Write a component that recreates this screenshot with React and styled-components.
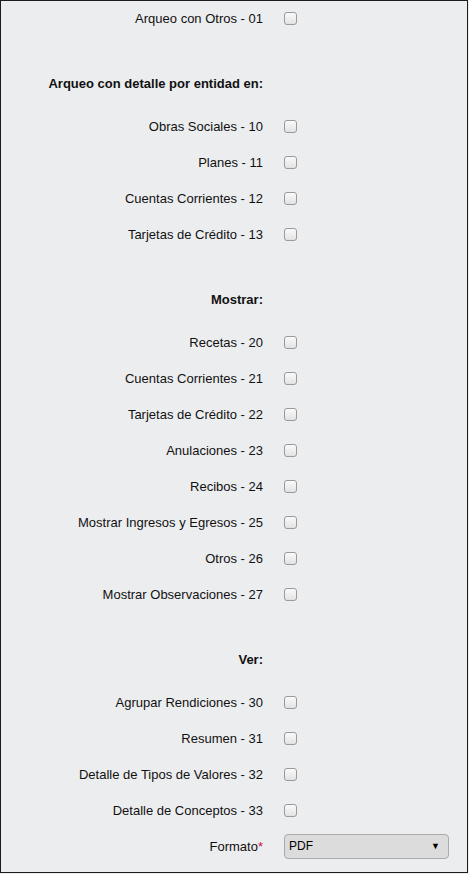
import React from 'react';
import styled, { createGlobalStyle } from 'styled-components';

const GlobalStyle = createGlobalStyle`
  html, body {
    margin: 0;
    padding: 0;
    background: #ecedef;
  }
  body {
    font-family: "Liberation Sans", Arial, sans-serif;
    font-size: 13px;
    color: #111;
  }
`;

const Panel = styled.div`
  box-sizing: border-box;
  width: 468px;
  height: 873px;
  border: 1px solid #1c1c1c;
  background: #ecedef;
  overflow: hidden;
`;

const Row = styled.div`
  display: grid;
  grid-template-columns: 262px 1fr;
  column-gap: 21px;
  align-items: center;
  height: 36px;
`;

const Label = styled.label`
  text-align: right;
  line-height: 16px;
`;

const Heading = styled.div`
  display: grid;
  grid-template-columns: 262px 1fr;
  align-items: center;
  height: 36px;
  margin: 28px 0 8px;
  font-weight: bold;
  text-align: right;
`;

const Check = styled.span`
  display: block;
  box-sizing: border-box;
  width: 13px;
  height: 13px;
  margin-top: -2px;
  border: 1px solid #9a9a9a;
  border-radius: 3px;
  background: linear-gradient(#fafafa, #e2e2e2);
`;

const Required = styled.span`
  color: #d0103a;
`;

const Select = styled.div`
  box-sizing: border-box;
  width: 165px;
  height: 25px;
  margin-top: -2px;
  display: flex;
  align-items: center;
  justify-content: space-between;
  padding: 0 8px 0 4px;
  background: #dcdcdc;
  border: 1px solid #ababab;
  border-radius: 4px;
  font-size: 12px;
  color: #000;
`;

const Arrow = styled.span`
  font-size: 9px;
`;

const sections = [
  { rows: ['Arqueo con Otros - 01'] },
  {
    title: 'Arqueo con detalle por entidad en:',
    rows: ['Obras Sociales - 10', 'Planes - 11', 'Cuentas Corrientes - 12', 'Tarjetas de Crédito - 13'],
  },
  {
    title: 'Mostrar:',
    rows: [
      'Recetas - 20',
      'Cuentas Corrientes - 21',
      'Tarjetas de Crédito - 22',
      'Anulaciones - 23',
      'Recibos - 24',
      'Mostrar Ingresos y Egresos - 25',
      'Otros - 26',
      'Mostrar Observaciones - 27',
    ],
  },
  {
    title: 'Ver:',
    rows: ['Agrupar Rendiciones - 30', 'Resumen - 31', 'Detalle de Tipos de Valores - 32', 'Detalle de Conceptos - 33'],
  },
];

const App = () => (
  <>
    <GlobalStyle />
    <Panel>
      {sections.map((s, i) => (
        <React.Fragment key={i}>
          {s.title && (
            <Heading>
              <span>{s.title}</span>
            </Heading>
          )}
          {s.rows.map((r) => (
            <Row key={r}>
              <Label>{r}</Label>
              <Check />
            </Row>
          ))}
        </React.Fragment>
      ))}
      <Row>
        <Label>
          Formato<Required>*</Required>
        </Label>
        <Select>
          <span>PDF</span>
          <Arrow>▼</Arrow>
        </Select>
      </Row>
    </Panel>
  </>
);

export default App;
